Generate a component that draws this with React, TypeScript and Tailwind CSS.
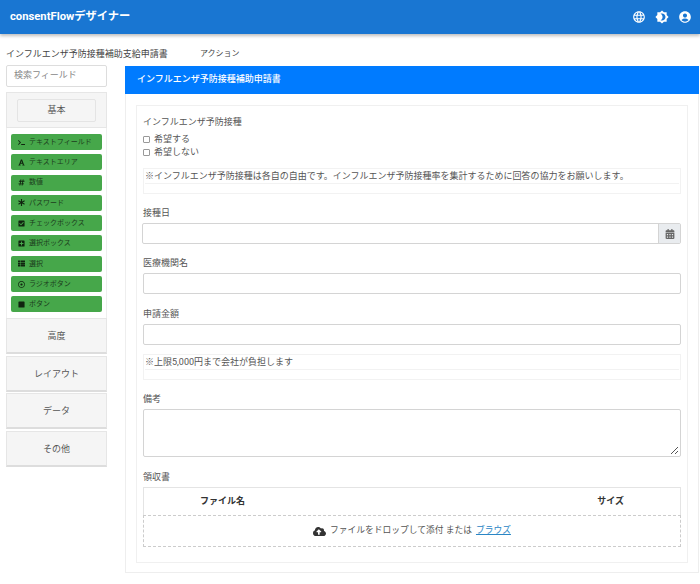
import { MdLanguage, MdBrightness4, MdAccountCircle } from 'react-icons/md';
import {
  FaTerminal,
  FaFont,
  FaHashtag,
  FaAsterisk,
  FaCheckSquare,
  FaPlusSquare,
  FaThList,
  FaStop,
  FaCalendarAlt,
  FaCloudUploadAlt,
  FaRegDotCircle,
} from 'react-icons/fa';

const tools = [
  { label: 'テキストフィールド', icon: FaTerminal },
  { label: 'テキストエリア', icon: FaFont },
  { label: '数値', icon: FaHashtag },
  { label: 'パスワード', icon: FaAsterisk },
  { label: 'チェックボックス', icon: FaCheckSquare },
  { label: '選択ボックス', icon: FaPlusSquare },
  { label: '選択', icon: FaThList },
  { label: 'ラジオボタン', icon: FaRegDotCircle },
  { label: 'ボタン', icon: FaStop },
];

const groups = ['高度', 'レイアウト', 'データ', 'その他'];

function Note({ text }: { text: string }) {
  return (
    <div className="mt-[9px] border border-[#f2f2f2] h-[26px] px-[1px] text-[9px] text-[#555] leading-[14px]">
      <div className="border-b border-[#f2f2f2] h-[15px]">{text}</div>
    </div>
  );
}

function Field({ label, className }: { label: string; className: string }) {
  return (
    <div className={className}>
      <div className="text-[9px] leading-[14px] text-[#555]">{label}</div>
      <div className="mt-[3px] h-[21px] border border-[#d4d4d4] rounded-[2px] bg-white" />
    </div>
  );
}

export default function App() {
  return (
    <div className="w-[700px] h-[584px] bg-white overflow-hidden font-['Roboto','Noto_Sans_CJK_JP',sans-serif]">
      <header className="h-[34px] bg-[#1976d2] shadow-[0_2px_3px_rgba(0,0,0,0.25)] flex items-center justify-between pl-[10px] pr-[8px]">
        <span className="text-white font-bold text-[11.25px]">consentFlowデザイナー</span>
        <div className="flex items-center gap-[9px] text-white">
          <MdLanguage size={14} />
          <MdBrightness4 size={14} />
          <MdAccountCircle size={14} />
        </div>
      </header>

      <div className="flex h-[32px] pt-[13px] pl-[6px] text-[9px] leading-[14px] text-[#444]">
        <span className="w-[194px]">インフルエンザ予防接種補助支給申請書</span>
        <span className="text-[8px]">アクション</span>
      </div>

      <div className="flex pl-[6px] pr-[1px] gap-[18px]">
        <aside className="w-[101px] shrink-0 -mt-[1px]">
          <div className="h-[22px] border border-[#ddd] rounded-[2px] flex items-center px-[7px] text-[9px] text-[#888]">
            検索フィールド
          </div>
          <div className="mt-[5px] h-[36px] bg-[#f5f5f5] border border-[#e6e6e6] flex items-center justify-center">
            <div className="w-[79px] h-[23px] border border-[#e4e4e4] rounded-[2px] flex items-center justify-center pt-[2px] text-[9px] text-[#555]">
              基本
            </div>
          </div>
          <div className="border-x border-[#eee] h-[190px] px-[4px] pt-[6px] flex flex-col gap-[4.3px]">
            {tools.map(({ label, icon: Icon }) => (
              <div
                key={label}
                className="h-[16px] shrink-0 bg-[#46a74a] rounded-[2px] flex items-center pl-[6px] gap-[4px] text-[7px] text-[#1c3d1d]"
              >
                <span className="w-[8px] flex justify-center">
                  <Icon size={7} className="text-[#10240f]" />
                </span>
                <span>{label}</span>
              </div>
            ))}
          </div>
          {groups.map((name) => (
            <div
              key={name}
              className="h-[36px] mb-[1.5px] pt-[3px] bg-[#f5f5f5] border border-[#e6e6e6] border-b-2 border-b-[#ddd] flex items-center justify-center text-[9px] text-[#555]"
            >
              {name}
            </div>
          ))}
        </aside>

        <main className="flex-1 h-[507px] border border-[#eee] border-t-0">
          {/* the blue title bar sits over the panel's side borders */}
          <div className="h-[28px] -mx-[1px] bg-[#007bff] flex items-center px-[12px] text-white text-[9px] font-medium">
            インフルエンザ予防接種補助申請書
          </div>
          <div className="mx-[10px] mt-[11px] h-[458px] border border-[#f0f0f0] px-[6px] pt-[9px]">
            <div className="text-[9px] leading-[14px] text-[#555]">インフルエンザ予防接種</div>
            <div className="mt-[4px] text-[9px] leading-[13px] text-[#555]">
              <label className="flex items-center gap-[4px]">
                <span className="w-[7px] h-[7px] border border-[#999] rounded-[1px]" />
                希望する
              </label>
              <label className="flex items-center gap-[4px]">
                <span className="w-[7px] h-[7px] border border-[#999] rounded-[1px]" />
                希望しない
              </label>
            </div>
            <Note text="※インフルエンザ予防接種は各自の自由です。インフルエンザ予防接種率を集計するために回答の協力をお願いします。" />

            <div className="mt-[12px] text-[9px] leading-[14px] text-[#555]">接種日</div>
            <div className="mt-[3px] -ml-[1px] h-[21px] flex border border-[#d4d4d4] rounded-[2px]">
              <div className="flex-1" />
              <div className="w-[22px] bg-[#e9ecef] border-l border-[#d4d4d4] flex items-center justify-center text-[#666]">
                <FaCalendarAlt size={10} />
              </div>
            </div>

            <Field label="医療機関名" className="mt-[12px]" />
            <Field label="申請金額" className="mt-[13px]" />
            <Note text="※上限5,000円まで会社が負担します" />

            <div className="mt-[12px] text-[9px] leading-[14px] text-[#555]">備考</div>
            <div className="relative mt-[3px] h-[48px] border border-[#d4d4d4] rounded-[2px]">
              <svg className="absolute right-[1px] bottom-[1px]" width="9" height="9" viewBox="0 0 9 9">
                <path d="M1 8 L8 1 M5 8 L8 5" stroke="#555" strokeWidth="1" />
              </svg>
            </div>

            <div className="mt-[13px] text-[9px] leading-[14px] text-[#555]">領収書</div>
            <div className="mt-[3px] border border-[#e4e4e4] border-b-0 h-[28px] flex items-center text-[9px] font-bold text-[#333]">
              <span className="w-[101px] text-right">ファイル名</span>
              <span className="ml-auto mr-[56px]">サイズ</span>
            </div>
            <div className="h-[32px] border border-dashed border-[#ccc] flex items-center justify-center gap-[4px] text-[8.75px] text-[#555]">
              <FaCloudUploadAlt size={13} className="text-[#333]" />
              <span>ファイルをドロップして添付 または</span>
              <span className="text-[#2a86c5] underline">ブラウズ</span>
            </div>
          </div>
        </main>
      </div>
    </div>
  );
}
